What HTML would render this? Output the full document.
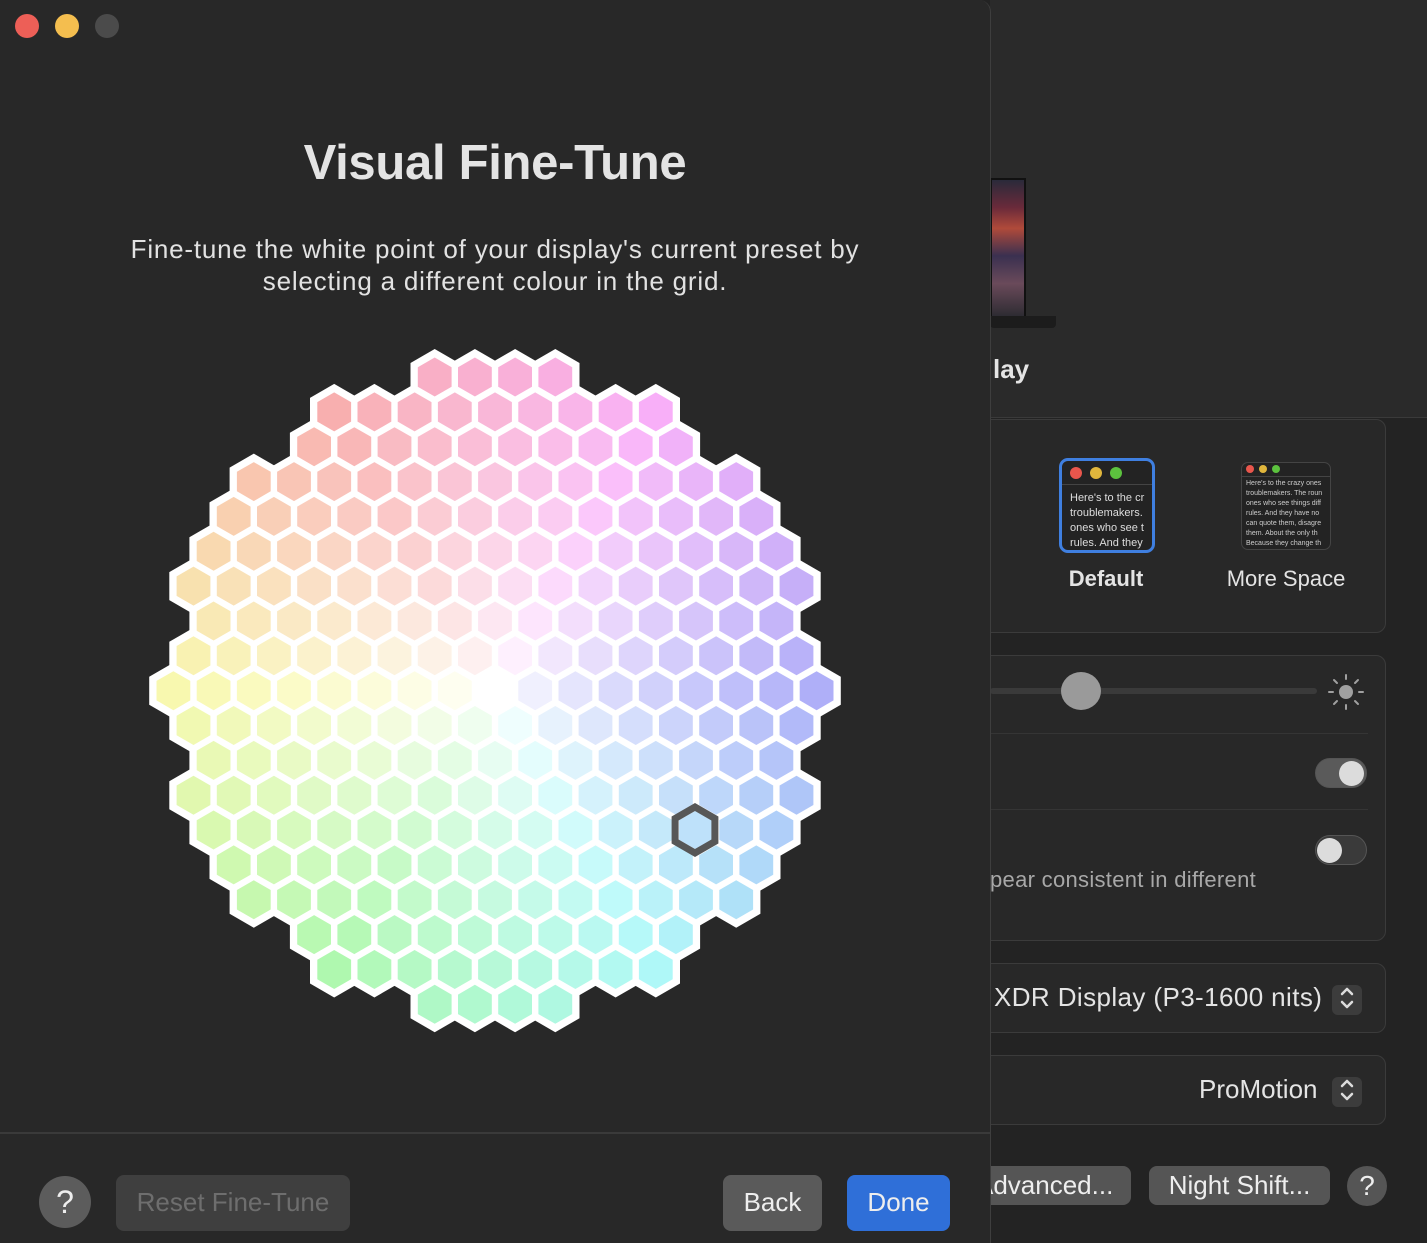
<!DOCTYPE html>
<html><head><meta charset="utf-8">
<style>
*{margin:0;padding:0;box-sizing:border-box}
html,body{width:1427px;height:1243px;overflow:hidden;background:#232323;font-family:"Liberation Sans",sans-serif}
.abs{position:absolute}
#right{left:990px;top:0;width:437px;height:1243px;background:#232323}
#rtop{left:990px;top:0;width:437px;height:418px;background:#2a2a2a;border-bottom:1px solid #3a3a3a}
.panel{position:absolute;left:960px;width:426px;background:#282828;border:1px solid #3b3b3b;border-radius:10px}
#win{left:0;top:0;width:991px;height:1243px;background:#282828;border-right:1px solid #3e3e3e;border-top-right-radius:12px;overflow:hidden}
.dot{position:absolute;width:24px;height:24px;border-radius:50%;top:14px}
h1{position:absolute;left:0;width:990px;top:135px;text-align:center;color:#e4e4e4;font-size:49px;font-weight:bold;letter-spacing:-0.3px}
.sub{position:absolute;left:0;width:990px;top:233px;text-align:center;color:#e2e2e2;font-size:26px;line-height:32px;letter-spacing:0.8px}
.btn{position:absolute;border-radius:8px;font-size:26px;text-align:center;color:#eee}
.sw{position:absolute;width:52px;height:30px;border-radius:15px;border:1px solid #555}
.knob{position:absolute;top:2px;width:25px;height:25px;border-radius:50%;background:#dcdcdc}
.stp{position:absolute;width:30px;height:30px;border-radius:6px;background:#3c3c3c}
</style></head><body>
<div id="right" class="abs"></div>
<div id="rtop" class="abs"></div>
<div class="abs" style="left:990px;top:178px;width:36px;height:142px;background:linear-gradient(180deg,#2a2a3a 0%,#6a2a3a 20%,#b04a3a 35%,#3a3050 55%,#6a4a5a 75%,#2a2a30 100%);border:2px solid #111"></div>
<div class="abs" style="left:990px;top:316px;width:66px;height:12px;background:#1c1c1c;border-radius:0 0 4px 4px"></div>
<div class="abs" style="left:993px;top:354px;color:#e4e4e4;font-size:26px;font-weight:bold">lay</div>
<div class="panel" style="top:419px;height:214px"></div>
<div class="abs" style="left:1059px;top:458px;width:96px;height:95px;border:3px solid #3f7fe0;border-radius:9px;background:#232323;overflow:hidden">
<div class="abs" style="left:8px;top:6px;width:12px;height:12px;border-radius:50%;background:#e9564c"></div>
<div class="abs" style="left:28px;top:6px;width:12px;height:12px;border-radius:50%;background:#e0b63c"></div>
<div class="abs" style="left:48px;top:6px;width:12px;height:12px;border-radius:50%;background:#5cc23e"></div>
<div class="abs" style="left:0;top:23px;width:96px;border-top:1px solid #444"></div>
<div class="abs" style="left:8px;top:30px;color:#ddd;font-size:11px;line-height:15px;white-space:nowrap">Here's to the cr<br>troublemakers.<br>ones who see t<br>rules. And they</div></div>
<div class="abs" style="left:1241px;top:462px;width:90px;height:88px;border:1px solid #444;border-radius:7px;background:#232323;overflow:hidden">
<div class="abs" style="left:4px;top:2px;width:8px;height:8px;border-radius:50%;background:#e9564c"></div>
<div class="abs" style="left:17px;top:2px;width:8px;height:8px;border-radius:50%;background:#e0b63c"></div>
<div class="abs" style="left:30px;top:2px;width:8px;height:8px;border-radius:50%;background:#5cc23e"></div>
<div class="abs" style="left:0;top:13px;width:90px;border-top:1px solid #444"></div>
<div class="abs" style="left:4px;top:16px;color:#ccc;font-size:7px;line-height:10px;white-space:nowrap">Here's to the crazy ones<br>troublemakers. The roun<br>ones who see things diff<br>rules. And they have no<br>can quote them, disagre<br>them. About the only th<br>Because they change th</div></div>
<div class="abs" style="left:1040px;top:566px;width:132px;text-align:center;color:#e4e4e4;font-size:22px;font-weight:bold">Default</div>
<div class="abs" style="left:1205px;top:566px;width:162px;text-align:center;color:#e4e4e4;font-size:22px">More Space</div>
<div class="panel" style="top:655px;height:286px"></div>
<div class="abs" style="left:990px;top:688px;width:327px;height:6px;border-radius:3px;background:#3a3a3a"></div>
<div class="abs" style="left:1061px;top:672px;width:40px;height:38px;border-radius:50%;background:#9a9a9a"></div>
<svg class="abs" style="left:1326px;top:672px" width="40" height="40" viewBox="0 0 40 40"><circle cx="20" cy="20" r="7" fill="#a0a0a0"/><g stroke="#a0a0a0" stroke-width="2" stroke-linecap="round"><path d="M20 3v4M20 33v4M3 20h4M33 20h4M8 8l3 3M29 29l3 3M8 32l3-3M29 11l3-3"/></g></svg>
<div class="abs" style="left:990px;top:733px;width:378px;border-top:1px solid #353535"></div>
<div class="abs" style="left:990px;top:809px;width:378px;border-top:1px solid #353535"></div>
<div class="sw" style="left:1315px;top:758px;background:#5a5a5a"><div class="knob" style="left:23px"></div></div>
<div class="sw" style="left:1315px;top:835px;background:#3a3a3a"><div class="knob" style="left:1px"></div></div>
<div class="abs" style="left:990px;top:867px;color:#a8a8a8;font-size:22px;white-space:nowrap;letter-spacing:0.3px">pear consistent in different</div>
<div class="panel" style="top:963px;height:70px"></div>
<div class="abs" style="left:994px;top:982px;color:#e4e4e4;font-size:26px;white-space:nowrap;letter-spacing:0.4px">XDR Display (P3-1600 nits)</div>
<div class="stp" style="left:1332px;top:985px"></div>
<div class="panel" style="top:1055px;height:70px"></div>
<div class="abs" style="left:1199px;top:1074px;color:#e4e4e4;font-size:26px">ProMotion</div>
<div class="stp" style="left:1332px;top:1077px"></div>
<svg class="abs" style="left:1332px;top:983px" width="30" height="122"><g fill="none" stroke="#ddd" stroke-width="2.5" stroke-linecap="round" stroke-linejoin="round"><path d="M10 11l5-5 5 5M10 19l5 5 5-5"/><path d="M10 103l5-5 5 5M10 111l5 5 5-5"/></g></svg>
<div class="btn" style="left:960px;top:1166px;width:171px;height:39px;background:#555;font-size:26px;line-height:38px;overflow:hidden"><span style="position:absolute;left:16px;top:0;white-space:nowrap">Advanced...</span></div>
<div class="btn" style="left:1149px;top:1166px;width:181px;height:39px;background:#555;line-height:38px">Night Shift...</div>
<div class="abs" style="left:1347px;top:1166px;width:40px;height:40px;border-radius:50%;background:#555;color:#eee;font-size:28px;text-align:center;line-height:40px">?</div>

<div id="win" class="abs">
<div class="dot" style="left:15px;background:#ed5f57"></div>
<div class="dot" style="left:55px;background:#f4be4f"></div>
<div class="dot" style="left:95px;background:#4b4b4b"></div>
<h1>Visual Fine-Tune</h1>
<div class="sub">Fine-tune the white point of your display's current preset by<br>selecting a different colour in the grid.</div>
<svg id="grid" class="abs" style="left:0;top:0" width="990" height="1120"></svg>
<div class="abs" style="left:0;top:1132px;width:990px;border-top:2px solid #3a3a3a"></div>
<div class="abs" style="left:39px;top:1176px;width:52px;height:52px;border-radius:50%;background:#5c5c5c;color:#eee;font-size:32px;text-align:center;line-height:52px">?</div>
<div class="btn" style="left:116px;top:1175px;width:234px;height:56px;background:#3f3f3f;color:#6e6e6e;line-height:55px">Reset Fine-Tune</div>
<div class="btn" style="left:723px;top:1175px;width:99px;height:56px;background:#5a5a5a;line-height:55px">Back</div>
<div class="btn" style="left:847px;top:1175px;width:103px;height:56px;background:#2f6fd8;line-height:55px">Done</div>
</div>
<script>
(function(){
var cx=495,cy=690,px=40.2,py=34.85,R=325;
var s1='',s2='';
function hex(x,y,r){var p=[];for(var i=0;i<6;i++){var a=Math.PI/180*(60*i-90);p.push((x+r*Math.cos(a)).toFixed(1)+','+(y+r*Math.sin(a)).toFixed(1));}return p.join(' ');}
for(var row=0;row<19;row++){var y=377+row*py,dy=y-cy;var half=(row%2==0)?0.5:0;
for(var k=-9;k<=9;k++){var dx=(k+half)*px;var x=cx+dx;if(Math.sqrt(dx*dx+dy*dy)>R+2)continue;
s1+='<polygon points="'+hex(x,y,28)+'" fill="#fff"/>';
var r=Math.min(1,Math.sqrt(dx*dx+dy*dy)/320);var th=Math.atan2(dy,dx)*180/Math.PI;var h=((240-th)%360+360)%360;
var L=100-17*Math.pow(r,0.8);var S=85;
s2+='<polygon points="'+hex(x,y,19.5)+'" fill="hsl('+h.toFixed(0)+','+S+'%,'+L.toFixed(1)+'%)"/>';}}
var sy=377+13*py;
s2+='<polygon points="'+hex(cx+200,sy,23)+'" fill="none" stroke="#575757" stroke-width="7"/>';
document.getElementById('grid').innerHTML=s1+s2;
})();
</script>
</body></html>
